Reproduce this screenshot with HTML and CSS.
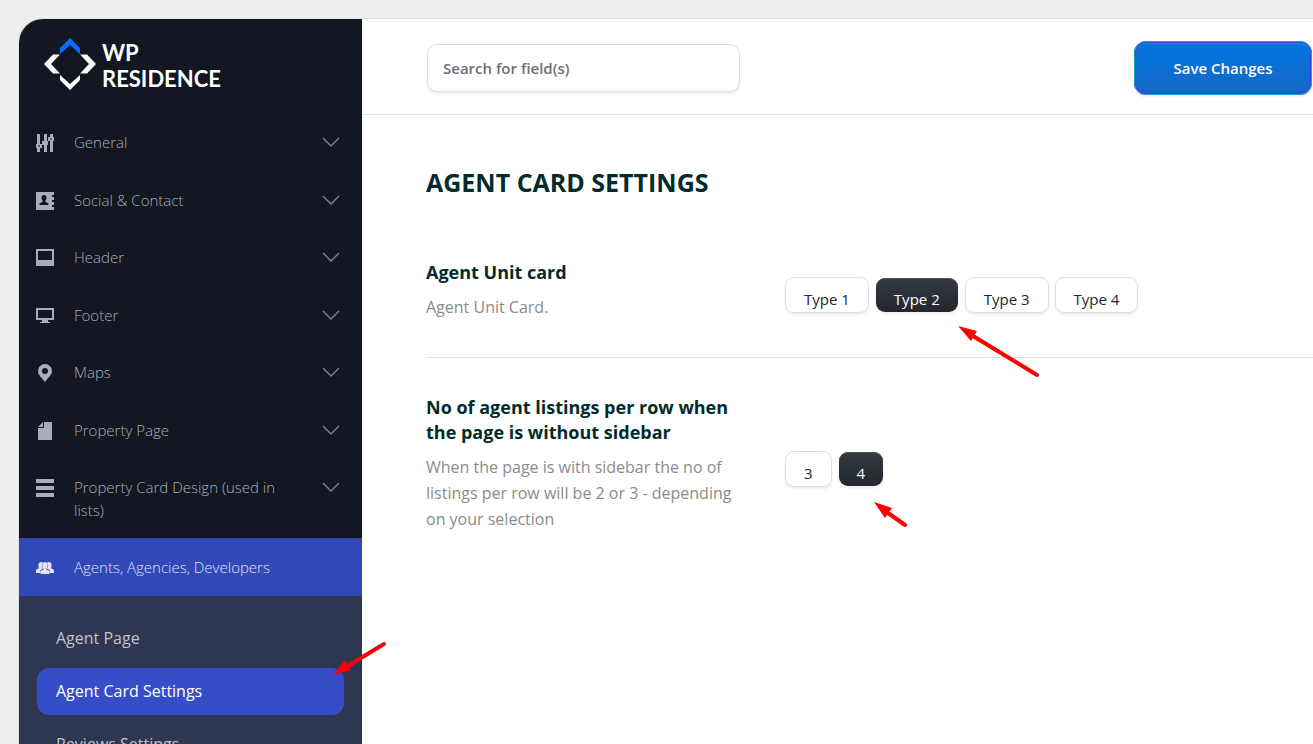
FILE: index.html
```html
<!DOCTYPE html>
<html lang="en">
<head>
  <meta charset="UTF-8">
  <meta name="viewport" content="width=device-width, initial-scale=1.0">
  <title>WP Residence - Agent Card Settings</title>
  <link rel="stylesheet" href="styles.css">
</head>
<body>
  <svg class="defs" aria-hidden="true">
    <symbol id="chevron" viewBox="0 0 18 10"><path d="M1 1l8 8 8-8" fill="none" stroke="currentColor" stroke-width="1.4"/></symbol>
  </svg>

  <div class="panel">
    <aside class="sidebar">
      <a class="logo" href="#">
        <svg width="54" height="54" viewBox="0 0 54 54" aria-hidden="true">
          <path fill="#0a6cff" d="M27 1l10 10v6L27 8l-10 9v-6z"/>
          <path fill="#fff" d="M1 27l9-9.500h7L8 27l9 9.500h-7zM53 27l-9-9.500h-7L46 27l-9 9.500h7zM27 53L17 43v-5l10 9 10-9v5z"/>
        </svg>
        <span>WP<br>RESIDENCE</span>
      </a>

      <nav class="menu">
        <a class="menu-item" href="#">
          <svg class="icon" viewBox="0 0 18 18"><path fill-rule="evenodd" d="M1 0h3v10h2v4H4v4H1v-4H0v-4h1zM2 11.500v1h2v-1zM8 0h3v7h1v4h-1v7H8v-7H6V7h2zM14 0h3v3h1v4h-1v11h-3V7h-2V3h2zM14 4.500v1h2v-1z"/></svg>
          <span>General</span>
          <svg class="chevron"><use href="#chevron"/></svg>
        </a>
        <a class="menu-item" href="#">
          <svg class="icon" viewBox="0 0 18 18"><path fill-rule="evenodd" d="M0 0h18v3h-2v2h2v3h-2v2h2v3h-2v2h2v3H0zM8 3C6.500 3 5.500 4 5.500 5.500c0 1.500.5 2.500 1.200 3.200v1.100L3.500 11.500V13h9v-1.500L9.300 9.800V8.700c.7-.7 1.200-1.700 1.200-3.200C10.500 4 9.500 3 8 3z"/></svg>
          <span>Social &amp; Contact</span>
          <svg class="chevron"><use href="#chevron"/></svg>
        </a>
        <a class="menu-item" href="#">
          <svg class="icon" viewBox="0 0 18 18"><path fill-rule="evenodd" d="M0 0h18v17H0zM2 2v9h14V2z"/></svg>
          <span>Header</span>
          <svg class="chevron"><use href="#chevron"/></svg>
        </a>
        <a class="menu-item" href="#">
          <svg class="icon" viewBox="0 0 18 18"><path fill-rule="evenodd" d="M0 1h18v12h-6v2h2v1H4v-1h2v-2H0zM2 3v8h14V3z"/></svg>
          <span>Footer</span>
          <svg class="chevron"><use href="#chevron"/></svg>
        </a>
        <a class="menu-item" href="#">
          <svg class="icon" viewBox="0 0 18 18"><path fill-rule="evenodd" d="M9 0a7 7 0 0 0-7 7c0 4 4.500 7.500 7 11 2.500-3.500 7-7 7-11a7 7 0 0 0-7-7zm0 4a3 3 0 1 1 0 6 3 3 0 0 1 0-6z"/></svg>
          <span>Maps</span>
          <svg class="chevron"><use href="#chevron"/></svg>
        </a>
        <a class="menu-item" href="#">
          <svg class="icon" viewBox="0 0 18 18"><path d="M8 0h8v18H2V6h6zM7 0v5H2z"/></svg>
          <span>Property Page</span>
          <svg class="chevron"><use href="#chevron"/></svg>
        </a>
        <a class="menu-item" href="#">
          <svg class="icon" viewBox="0 0 18 18"><path d="M0 0h18v4H0zM0 7h18v4H0zM0 14h18v4H0z"/></svg>
          <span>Property Card Design (used in lists)</span>
          <svg class="chevron"><use href="#chevron"/></svg>
        </a>
        <a class="menu-item active" href="#">
          <svg class="icon" viewBox="0 0 18 18"><path d="M5 3c1 0 1.500.3 2 1-1.300 1.500-1 4 0 5.500L4.500 11 4 14H0v-3l3-2C2 7 2 3 5 3zM13 3c-1 0-1.500.3-2 1 1.300 1.500 1 4 0 5.500l2.500 1.500.5 3h4v-3l-3-2c1-2 1-6-2-6zM9 3c3 0 3 4.500 1.500 6.500v1l3 1.500v3h-9v-3l3-1.500v-1C6 7.500 6 3 9 3z"/></svg>
          <span>Agents, Agencies, Developers</span>
        </a>
      </nav>

      <div class="submenu">
        <a href="#">Agent Page</a>
        <a class="current" href="#">Agent Card Settings
          <svg class="arrow arrow-menu" viewBox="0 0 55 36" aria-hidden="true"><path class="line" d="M52 3L14 26"/><path class="head" d="M1 34l12-15 6 10z"/></svg>
        </a>
        <a href="#">Reviews Settings</a>
      </div>
    </aside>

    <main class="main">
      <header class="topbar">
        <input class="search" type="text" placeholder="Search for field(s)" aria-label="Search for field(s)">
        <button class="save" type="button">Save Changes</button>
      </header>

      <form class="settings">
        <h1>AGENT CARD SETTINGS</h1>

        <section class="option">
          <div class="option-text">
            <h2 id="card-title">Agent Unit card</h2>
            <p>Agent Unit Card.</p>
          </div>
          <div class="choices" role="radiogroup" aria-labelledby="card-title">
            <label class="choice"><input type="radio" name="card"><span>Type 1</span></label>
            <label class="choice"><input type="radio" name="card" checked><span>Type 2</span>
              <svg class="arrow arrow-card" viewBox="0 0 84 54" aria-hidden="true"><path class="line" d="M80 50L16 11"/><path class="head" d="M1 1l19 5-6 10z"/></svg>
            </label>
            <label class="choice"><input type="radio" name="card"><span>Type 3</span></label>
            <label class="choice"><input type="radio" name="card"><span>Type 4</span></label>
          </div>
        </section>

        <section class="option">
          <div class="option-text">
            <h2 id="row-title">No of agent listings per row when the page is without sidebar</h2>
            <p>When the page is with sidebar the no of listings per row will be 2 or 3 - depending on your selection</p>
          </div>
          <div class="choices" role="radiogroup" aria-labelledby="row-title">
            <label class="choice"><input type="radio" name="per-row"><span>3</span></label>
            <label class="choice"><input type="radio" name="per-row" checked><span>4</span>
              <svg class="arrow arrow-row" viewBox="0 0 36 28" aria-hidden="true"><path class="line" d="M32 24L15 12"/><path class="head" d="M1 1l18 6-7 10z"/></svg>
            </label>
          </div>
        </section>
      </form>
    </main>
  </div>
</body>
</html>
```
FILE: styles.css
```css
* {
  box-sizing: border-box;
}

body {
  margin: 0;
  height: 100vh;
  overflow: hidden;
  padding: 18px 0 0 18px;
  background: #efefef;
  font-family: "Segoe UI", "Open Sans", "Noto Sans", sans-serif;
  font-size: 15px;
}

a {
  color: inherit;
  text-decoration: none;
}

.defs {
  position: absolute;
  width: 0;
  height: 0;
}

.panel {
  display: flex;
  min-height: 100%;
  border: 1px solid #dcdfe6;
  border-width: 1px 0 0 1px;
  border-radius: 24px 0 0 0;
  background: #fff;
}

/* Sidebar */
.sidebar {
  flex: none;
  width: 343px;
  border-radius: 24px 0 0 0;
  background: #121721;
  color: #a7adba;
}

.logo {
  display: flex;
  align-items: flex-start;
  gap: 5px;
  height: 94px;
  padding: 18px 24px 0;
  color: #fff;
  font-family: Lato, sans-serif;
  font-size: 22px;
  font-weight: 700;
  line-height: 26px;
}

.logo span {
  padding-top: 3px;
}

.menu-item {
  display: flex;
  align-items: flex-start;
  padding: 18px 22px 17px 17px;
  font-weight: 300;
  line-height: 1.5;
}

.menu-item span {
  flex: 1;
  margin: 0 40px 0 20px;
}

.icon {
  width: 18px;
  height: 18px;
  margin-top: 3px;
  fill: #a7adba;
}

.chevron {
  width: 18px;
  height: 10px;
  margin-top: 6px;
  color: #7d8495;
}

.menu-item.active {
  background: #3248b8;
  color: #dfe3f5;
}

.active .icon {
  fill: #e2e5f1;
}

.submenu {
  display: flex;
  flex-direction: column;
  gap: 6px;
  padding: 19px 18px;
  background: #2e3652;
  font-size: 16px;
}

.submenu a {
  position: relative;
  padding: 0 19px;
  border-radius: 12px;
  color: #c0c3cb;
  line-height: 47px;
}

.submenu .current {
  background: #354dc9;
  color: #fff;
}

/* Main column */
.main {
  flex: 1;
  min-width: 0;
}

.topbar {
  display: flex;
  align-items: center;
  justify-content: space-between;
  height: 96px;
  padding: 2px 1px 0 65px;
  border-bottom: 1px solid #dcdfe6;
}

.search {
  width: 313px;
  height: 48px;
  padding: 0 15px;
  border: 1px solid #dcdfe6;
  border-radius: 10px;
  box-shadow: 0 2px 3px rgba(0, 0, 0, 0.08);
  font: 600 15px "Segoe UI", "Open Sans", "Noto Sans", sans-serif;
}

.search::placeholder {
  color: #6b6f7a;
  opacity: 1;
}

.save {
  width: 178px;
  height: 54px;
  border: 2px solid #3b3fe6;
  border-radius: 12px;
  outline: 1px solid #25a9b5;
  outline-offset: -1px;
  background: linear-gradient(#0275e4, #1568c2);
  box-shadow: 0 2px 3px rgba(0, 0, 0, 0.08), inset 0 1px 0 #2a86e2;
  color: #fff;
  font: 600 15px "Segoe UI", "Open Sans", "Noto Sans", sans-serif;
}

.settings {
  padding: 50px 0 0 64px;
}

.settings h1 {
  margin: 0 0 24px;
  color: #022b2b;
  font-size: 25px;
  font-weight: 700;
  line-height: 34px;
}

.option {
  display: flex;
  align-items: center;
  gap: 49px;
  padding: 37px 0;
}

.option + .option {
  border-top: 1px solid #dedfe2;
}

.option-text {
  width: 310px;
}

.option h2 {
  margin: 0 0 9px;
  color: #022b2b;
  font-size: 18px;
  font-weight: 700;
  line-height: 25px;
}

.option p {
  margin: 0;
  color: #8b8b8b;
  font-size: 16px;
  line-height: 26px;
}

.choices {
  display: flex;
  align-items: center;
  gap: 6px;
  padding-top: 10px;
}

.choice {
  position: relative;
}

.choice input {
  position: absolute;
  inset: 0;
  margin: 0;
  opacity: 0;
}

.choice span {
  display: block;
  height: 36px;
  padding: 9px 18px 0;
  border: 1px solid #dedfe6;
  border-radius: 9px;
  box-shadow: 0 2px 3px rgba(0, 0, 0, 0.08);
  color: #22262f;
  line-height: 25px;
}

.choice input:checked + span {
  margin: 0 1px;
  height: 34px;
  padding: 9px 18px 0;
  border: 0;
  background: linear-gradient(#343a43, #23272d);
  box-shadow: 0 2px 3px rgba(0, 0, 0, 0.08), inset 0 1px 0 #4c525b;
  color: #fff;
}

/* Pointers laid over the controls */
.arrow {
  position: absolute;
  z-index: 1;
  pointer-events: none;
}

.arrow .line {
  stroke: #f00;
  stroke-width: 4;
  stroke-linecap: round;
}

.arrow .head {
  fill: #f00;
}

.arrow-menu {
  right: -43px;
  top: -27px;
  width: 55px;
  height: 36px;
}

.arrow-card {
  left: 82px;
  top: 47px;
  width: 84px;
  height: 54px;
}

.arrow-row {
  left: 35px;
  top: 49px;
  width: 36px;
  height: 28px;
}
```
